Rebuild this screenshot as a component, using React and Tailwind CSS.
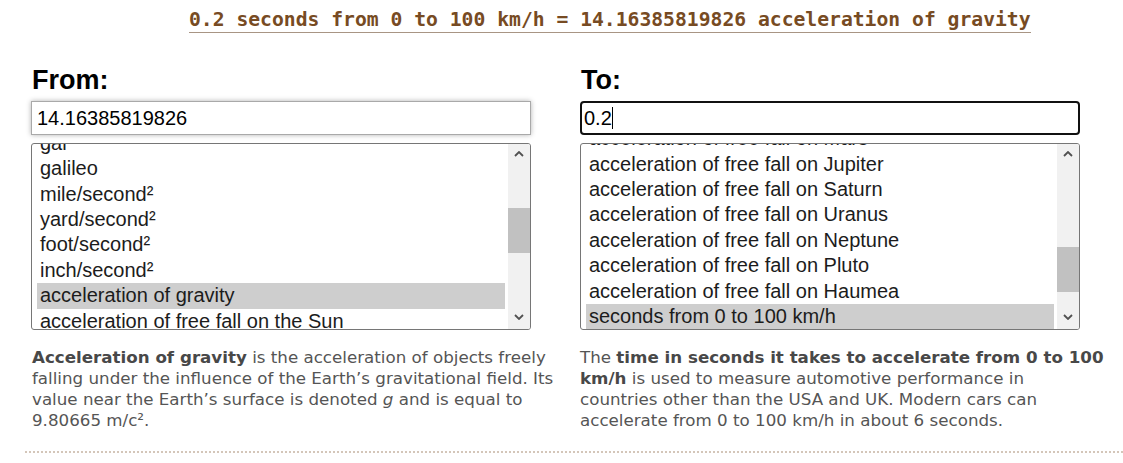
const fromUnits = [
  "gal",
  "galileo",
  "mile/second²",
  "yard/second²",
  "foot/second²",
  "inch/second²",
  "acceleration of gravity",
  "acceleration of free fall on the Sun",
];

const toUnits = [
  "acceleration of free fall on Mars",
  "acceleration of free fall on Jupiter",
  "acceleration of free fall on Saturn",
  "acceleration of free fall on Uranus",
  "acceleration of free fall on Neptune",
  "acceleration of free fall on Pluto",
  "acceleration of free fall on Haumea",
  "seconds from 0 to 100 km/h",
];

function Chevron({ down }) {
  return (
    <svg width="10" height="6" viewBox="0 0 10 6" className="block mx-auto">
      <path
        d={down ? "M1 1 L5 5 L9 1" : "M1 5 L5 1 L9 5"}
        fill="none"
        stroke="#505050"
        strokeWidth="1.8"
      />
    </svg>
  );
}

function UnitList({ units, selected, offsetClass, thumbClass }) {
  return (
    <div className="mt-[8px] h-[187px] border border-[#767676] rounded-[3px] flex overflow-hidden bg-white">
      <div className="flex-1 overflow-hidden pl-[5px] pr-[3px] text-[20px] text-[#1c1c1c]">
        <div className={offsetClass}>
          {units.map((u) => (
            <div
              key={u}
              className={`h-[25.4px] leading-[25.4px] px-[3px] whitespace-nowrap ${
                u === selected ? "bg-[#cecece]" : ""
              }`}>
              {u}
            </div>
          ))}
        </div>
      </div>
      <div className="w-[22px] bg-[#f1f1f1] flex flex-col">
        <div className="pt-[7px] h-[20px]">
          <Chevron />
        </div>
        <div className={`w-full h-[45px] bg-[#c1c1c1] ${thumbClass}`}></div>
        <div className="flex-1"></div>
        <div className="pb-[9px]">
          <Chevron down />
        </div>
      </div>
    </div>
  );
}

export default function App() {
  return (
    <main className="w-[1123px] h-[463px] bg-white overflow-hidden font-['Liberation_Sans',Arial,sans-serif] text-[#1f1f1f]">
      <div className="pt-[8px] pl-[189px]">
        <div className="inline-block font-['DejaVu_Sans_Mono',monospace] font-bold text-[19.7px] leading-[23px] text-[#774b23] border-b border-[#a89584] pb-[1px]">
          0.2 seconds from 0 to 100 km/h = 14.16385819826 acceleration of gravity
        </div>
      </div>

      <div className="flex gap-[49px] pl-[31px] mt-[32px]">
        <section className="w-[500px]">
          <h2 className="font-bold text-[27px] leading-[31px] text-black pl-[1px]">From:</h2>
          <div className="mt-[5px] h-[34px] border border-[#a9a9a9] shadow-[0_0_5px_rgba(0,0,0,0.3)] px-[5px] text-[20px] leading-[32px] text-black">
            14.16385819826
          </div>
          <UnitList
            units={fromUnits}
            selected="acceleration of gravity"
            offsetClass="-mt-[13.2px]"
            thumbClass="mt-[44px]"
          />
          <p className="mt-[17px] font-['DejaVu_Sans',Verdana,sans-serif] text-[16.7px] leading-[21px] text-[#555] pl-[1px] w-[527px]">
            <b className="text-[#484848]">Acceleration of gravity</b> is the acceleration of objects freely falling
            under the influence of the Earth’s gravitational field. Its value near the Earth’s surface is denoted{" "}
            <i>g</i> and is equal to 9.80665 m/c².
          </p>
        </section>

        <section className="w-[500px]">
          <h2 className="font-bold text-[27px] leading-[31px] text-black pl-[1px]">To:</h2>
          <div className="mt-[5px] h-[34px] border-2 border-[#111] rounded-[4px] px-[2px] text-[20px] leading-[30px] text-black flex items-center">
            0.2<span className="inline-block w-[1px] h-[22px] bg-black"></span>
          </div>
          <UnitList
            units={toUnits}
            selected="seconds from 0 to 100 km/h"
            offsetClass="-mt-[17.8px]"
            thumbClass="mt-[83px]"
          />
          <p className="mt-[17px] font-['DejaVu_Sans',Verdana,sans-serif] text-[16.7px] leading-[21px] text-[#555] w-[526px]">
            The <b className="text-[#484848]">time in seconds it takes to accelerate from 0 to 100 km/h</b> is used
            to measure automotive performance in countries other than the USA and UK. Modern cars can accelerate from
            0 to 100 km/h in about 6 seconds.
          </p>
        </section>
      </div>

      <div className="ml-[25px] mt-[20px] border-t-2 border-dotted border-[#d4c6b9]"></div>
    </main>
  );
}
